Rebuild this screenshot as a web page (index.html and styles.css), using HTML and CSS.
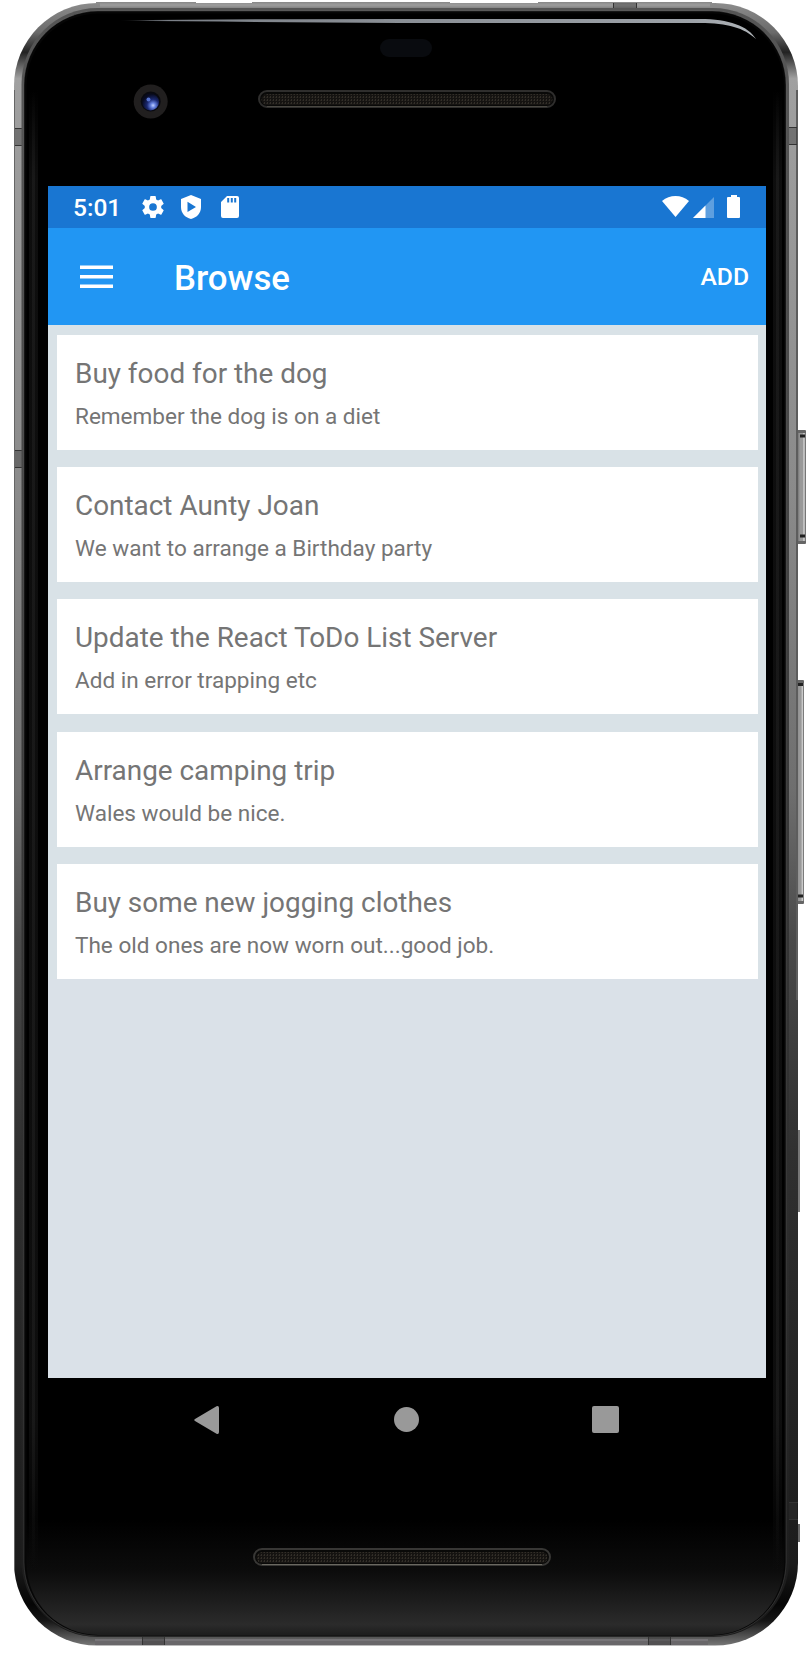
FILE: index.html
```html
<!DOCTYPE html>
<html lang="en">
<head>
<meta charset="utf-8">
<title>Browse</title>
<link rel="stylesheet" href="styles.css">
</head>
<body>
<div class="device">
  <svg class="frame" viewBox="0 0 812 1660" aria-hidden="true">
    <defs>
      <linearGradient id="metal" x1="0" y1="0" x2="0" y2="1">
        <stop offset="0" stop-color="#8c8c8c"/><stop offset=".018" stop-color="#6a6a6a"/><stop offset=".03" stop-color="#222"/>
        <stop offset=".046" stop-color="#a0a0a0"/><stop offset=".3" stop-color="#8a8a8a"/><stop offset=".48" stop-color="#6e6e6e"/>
        <stop offset=".57" stop-color="#4a4a4a"/><stop offset=".7" stop-color="#303030"/><stop offset=".95" stop-color="#1c1c1c"/>
        <stop offset=".975" stop-color="#050505"/><stop offset=".985" stop-color="#151515"/><stop offset="1" stop-color="#777"/>
      </linearGradient>
      <linearGradient id="rim" x1="0" y1="0" x2="0" y2="1">
        <stop offset="0" stop-color="#555"/><stop offset=".06" stop-color="#555"/><stop offset=".5" stop-color="#383838"/><stop offset=".8" stop-color="#2c2c2c"/><stop offset="1" stop-color="#1a1a1a"/>
      </linearGradient>
      <linearGradient id="edge" x1="0" y1="90" x2="0" y2="1570" gradientUnits="userSpaceOnUse">
        <stop offset="0" stop-color="#1b1b1b" stop-opacity="0"/><stop offset=".06" stop-color="#1b1b1b"/><stop offset=".9" stop-color="#1b1b1b"/><stop offset="1" stop-color="#1b1b1b" stop-opacity="0"/>
      </linearGradient>
      <linearGradient id="glass" x1="0" y1="1520" x2="0" y2="1636" gradientUnits="userSpaceOnUse">
        <stop offset="0" stop-color="#000"/><stop offset=".45" stop-color="#0c0c0c"/><stop offset=".9" stop-color="#2b2b2b"/><stop offset="1" stop-color="#1c1c1c"/>
      </linearGradient>
      <linearGradient id="shine" x1="0" x2="1" y1="0" y2="0">
        <stop offset="0" stop-color="#7b8087" stop-opacity="0"/><stop offset=".08" stop-color="#7b8087"/><stop offset=".9" stop-color="#9da2a8"/><stop offset="1" stop-color="#b0b5b9"/>
      </linearGradient>
      <linearGradient id="key" x1="0" x2="1" y1="0" y2="0">
        <stop offset="0" stop-color="#777"/><stop offset=".25" stop-color="#999"/><stop offset=".6" stop-color="#999"/><stop offset=".75" stop-color="#ddd"/><stop offset="1" stop-color="#555"/>
      </linearGradient>
      <radialGradient id="lens" cx=".65" cy=".7" r=".65">
        <stop offset="0" stop-color="#c0d0ff"/><stop offset=".22" stop-color="#6580dd"/><stop offset=".55" stop-color="#1a2870"/><stop offset="1" stop-color="#080b20"/>
      </radialGradient>
      <pattern id="mesh" width="3" height="3" patternUnits="userSpaceOnUse">
        <rect width="3" height="3" fill="#151311"/><rect width="1" height="2" fill="#322e28"/><rect x="2" y="1" width="1" height="1" fill="#24211d"/>
      </pattern>
    </defs>

    <!-- side keys -->
    <g>
      <rect x="797" y="430" width="9" height="114" rx="1" fill="#666"/>
      <rect x="798" y="433" width="8" height="108" fill="url(#key)"/>
      <path d="M800 436h5M800 536h5" stroke="#222" stroke-width="3"/>
      <rect x="797" y="680" width="7" height="224" rx="1" fill="#666"/>
      <rect x="797" y="683" width="7" height="218" fill="url(#key)"/>
      <path d="M797 684.500h6M797 896h6" stroke="#222" stroke-width="3"/>
      <rect x="797" y="1130" width="3" height="82" fill="#777"/>
      <rect x="797" y="1524" width="3" height="18" fill="#666"/>
    </g>

    <!-- metal body and antenna bands -->
    <rect x="14" y="3" width="784" height="1642.500" rx="83" fill="url(#metal)"/>
    <path d="M96 2.500H196M252 2.500H450M538 2.500H712" stroke="#8a8a8a"/>
    <path d="M14.500 90V1570" stroke="#666"/><path d="M797 90V1000" stroke="#5d5d5d" stroke-width="2"/>
    <path d="M100 5H710" stroke="#999" stroke-width="3"/>
    <path d="M95 1642H708" stroke="#69676a" stroke-width="6"/>
    <path d="M95 1640H708" stroke="#858385" stroke-width="1"/>
    <g fill="#333" fill-opacity=".4">
      <rect x="15" y="128" width="12" height="18"/><rect x="785" y="127" width="12" height="18"/>
      <rect x="15" y="450" width="12" height="18"/><rect x="613" y="3" width="24" height="10"/>
      <rect x="142" y="1636" width="23" height="9"/><rect x="648" y="1636" width="23" height="9"/>
      <rect x="786" y="1503" width="11" height="17"/>
    </g>
    <path d="M15 128.500h12M15 145.500h12M785 127.500h12M785 144.500h12M15 450.500h12M15 467.500h12M613.500 3v10M636.500 3v10M142.500 1636v9M164.500 1636v9M648.500 1636v9M670.500 1636v9M786 1502.500h12M786 1519.500h12" stroke="#333"/>

    <!-- glass front -->
    <rect x="21.500" y="8" width="767.500" height="1629" rx="76" fill="url(#rim)"/>
    <rect x="24" y="11" width="762" height="1625" rx="74" fill="#060606" stroke="#737373" stroke-opacity=".3"/>
    <rect x="26.500" y="13.500" width="757.500" height="1621.500" rx="72" fill="url(#glass)"/>
    <g fill="url(#edge)">
      <rect x="29" y="90" width="9" height="1480" opacity=".5"/><rect x="32" y="90" width="3" height="1480" opacity=".8"/>
      <rect x="773" y="90" width="9" height="1480" opacity=".5"/><rect x="776" y="90" width="3" height="1480" opacity=".8"/>
    </g>
    <path d="M118 20.500Q240 19 400 19H700C729 19 748 26 756 39C744 28 728 23 700 23H400Q240 22 118 20.500Z" fill="url(#shine)"/>

    <!-- sensors and speakers -->
    <rect x="380" y="39" width="52" height="18" rx="9" fill="#090b0f"/>
    <circle cx="150.700" cy="101.500" r="17" fill="#211f1f"/>
    <circle cx="150.700" cy="101.500" r="10" fill="#090a10"/>
    <circle cx="150.500" cy="102" r="8.500" fill="url(#lens)"/>
    <circle cx="148.500" cy="99.500" r="2" fill="#5774d0"/>
    <rect x="259" y="91" width="296" height="16" rx="8" fill="#090908" stroke="#2f2e2d" stroke-width="2"/>
    <rect x="261.500" y="94" width="291" height="11" rx="5.500" fill="url(#mesh)"/>
    <path d="M267 106.500H547" stroke="#4a4842"/>
    <rect x="254" y="1549" width="296" height="16" rx="8" fill="#090908" stroke="#383735" stroke-width="2"/>
    <rect x="256.500" y="1552" width="291" height="11" rx="5.500" fill="url(#mesh)"/>
    <path d="M262 1564.500H542" stroke="#6a6860"/>
  </svg>

  <main class="display">
    <div class="screen">
      <div class="statusbar">
        <span class="clock">5:01</span>
        <svg class="gear" viewBox="2 2 20 20"><path fill-rule="evenodd" d="M19.430 12.980c.04-.32.07-.64.07-.98s-.03-.66-.07-.98l2.110-1.650c.19-.15.24-.42.12-.64l-2-3.460c-.12-.22-.39-.3-.61-.22l-2.490 1c-.52-.4-1.080-.73-1.690-.98l-.38-2.650C14.460 2.180 14.250 2 14 2h-4c-.25 0-.46.18-.49.42l-.38 2.650c-.61.25-1.170.59-1.690.98l-2.490-1c-.23-.09-.49 0-.61.22l-2 3.460c-.13.22-.07.49.12.64l2.110 1.650c-.04.32-.07.65-.07.98s.03.66.07.98l-2.110 1.650c-.19.15-.24.42-.12.64l2 3.460c.12.22.39.3.61.22l2.490-1c.52.4 1.080.73 1.690.98l.38 2.650c.03.24.24.42.49.42h4c.25 0 .46-.18.49-.42l.38-2.650c.61-.25 1.170-.59 1.690-.98l2.490 1c.23.09.49 0 .61-.22l2-3.460c.12-.22.07-.49-.12-.64l-2.110-1.650zM12 15.500a3.500 3.500 0 1 1 0-7 3.500 3.500 0 0 1 0 7z"/></svg>
        <svg class="shield" viewBox="0 0 20 24"><path fill-rule="evenodd" d="M10 0 20 4V12C20 18 16 22.500 10 24C4 22.500 0 18 0 12V4ZM6.500 6.800V17L15 12Z"/></svg>
        <svg class="card-icon" viewBox="0 0 18 22"><path fill-rule="evenodd" d="M6 0H16Q18 0 18 2V20Q18 22 16 22H2Q0 22 0 20V6ZM6.200 2V6.500H8.200V2ZM9.800 2V6.500H11.800V2ZM13.200 2V6.500H15.200V2Z"/></svg>
        <svg class="wifi" viewBox="0 0 27 21"><path d="M0 5Q6 0 13.500 0T27 5L13.500 21Z"/></svg>
        <svg class="signal" viewBox="0 0 21 21"><path d="M21 0V21H0Z" fill-opacity=".3"/><path d="M12.500 8.500V21H0Z"/></svg>
        <svg class="battery" viewBox="0 0 13 23"><path d="M4 0H10V2H12Q13 2 13 3V22Q13 23 12 23H1Q0 23 0 22V3Q0 2 1 2H4Z"/></svg>
      </div>
      <header class="appbar">
        <svg class="menu" viewBox="0 0 33 24"><path d="M0 .5H33V4H0ZM0 10H33V13.500H0ZM0 19.500H33V23H0Z"/></svg>
        <h1 class="title">Browse</h1>
        <span class="add">ADD</span>
      </header>
      <section class="content">
        <div class="list">
          <article class="item"><h2>Buy food for the dog</h2><p>Remember the dog is on a diet</p></article>
          <article class="item"><h2>Contact Aunty Joan</h2><p>We want to arrange a Birthday party</p></article>
          <article class="item"><h2>Update the React ToDo List Server</h2><p>Add in error trapping etc</p></article>
          <article class="item"><h2>Arrange camping trip</h2><p>Wales would be nice.</p></article>
          <article class="item"><h2>Buy some new jogging clothes</h2><p>The old ones are now worn out...good job.</p></article>
        </div>
      </section>
    </div>
    <nav class="navbar">
      <svg class="back" viewBox="0 0 25 28"><path d="M1 13 22.500 .3Q25 -.5 25 2V26Q25 28.500 22.500 27.700L1 15Q-.5 14 1 13Z"/></svg>
      <svg class="home" viewBox="0 0 25 25"><circle cx="12.500" cy="12.500" r="12.500"/></svg>
      <svg class="recent" viewBox="0 0 27 27"><rect width="27" height="27" rx="2"/></svg>
    </nav>
  </main>
</div>
</body>
</html>
```
FILE: styles.css
```css
* { box-sizing: border-box; margin: 0; }
body { background: #fff; font-family: Roboto, "Liberation Sans", sans-serif; }
.device { display: grid; width: 812px; height: 1660px; }
.frame, .display { grid-area: 1 / 1; }
.frame { width: 812px; height: 1660px; display: block; }
.display { z-index: 1; padding: 186px 46px 0 48px; }
.screen { display: flex; flex-direction: column; height: 1192px; background: #dae1e8; }

.statusbar { display: flex; align-items: center; height: 42px; padding: 0 26px 0 25px; background: #1976d2; color: #fff; fill: #fff; }
.clock { width: 68.500px; padding-top: 2px; font-size: 24.500px; line-height: 40px; font-weight: 500; }
.gear { width: 22px; height: 22px; margin-right: 17px; }
.shield { width: 20px; height: 24px; margin-right: 20px; }
.card-icon { width: 18px; height: 22px; }
.wifi { width: 27px; height: 21px; margin: -2px 4px 0 auto; }
.signal { width: 21px; height: 21px; margin-right: 13px; }
.battery { width: 13px; height: 23px; margin-top: -1px; }

.appbar { display: flex; align-items: center; height: 97.400px; padding: 0 17px 0 32px; background: #2196f3; color: #fff; }
.menu { width: 33px; height: 24px; fill: #fff; }
.title { margin-left: 61px; padding-top: 2px; font-size: 34.800px; font-weight: 500; line-height: 42px; }
.add { margin-left: auto; font-size: 24.700px; font-weight: 500; line-height: 30px; }

.content { flex: 1; }
.list { display: flex; flex-direction: column; gap: 17.200px; padding: 9.600px 8px 0 9px; background: #d9e2e7; }
.item { height: 115px; padding: 22px 18px 0; background: #fff; color: #757575; }
.item h2 { font-size: 27.900px; font-weight: 400; line-height: 34px; white-space: nowrap; }
.item p { padding-top: 12px; font-size: 22.550px; line-height: 28px; white-space: nowrap; }

.navbar { display: flex; align-items: center; height: 83px; padding: 0 147px 0 146px; justify-content: space-between; fill: #999; }
.back { width: 25px; height: 28px; }
.home { width: 25px; height: 25px; margin-left: 1px; }
.recent { width: 27px; height: 27px; }
```
